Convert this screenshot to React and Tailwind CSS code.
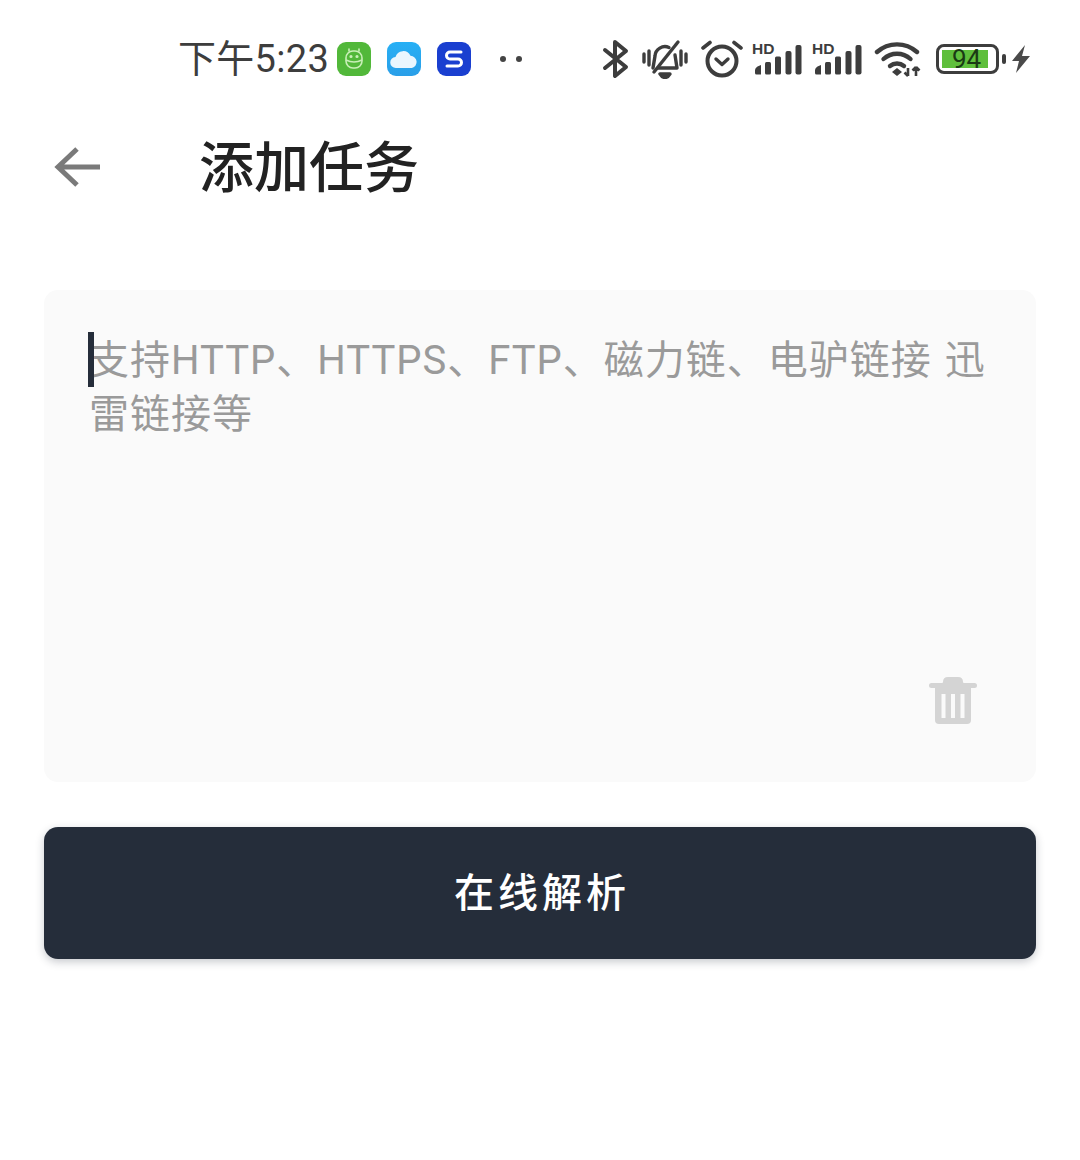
import React from 'react';

const cjk = 'font-["Roboto","Noto_Sans_CJK_SC",sans-serif]';

const AppIcon = ({ className, children }) => (
    <div className={`w-[34px] h-[34px] rounded-[9px] flex items-center justify-center ${className}`}>{children}</div>
);

const SignalIcon = () => (
    <svg width="50" height="42" viewBox="0 -4 50 42" className="shrink-0">
        <text x="0" y="12" fontFamily="Liberation Sans, sans-serif" fontWeight="700" fontSize="15.5" fill="#3d3d3d">HD</text>
        <g fill="#3d3d3d">
            <path d="M3 28 Q3 26 5.5 24.5 L9 23 V32.5 H4.5 Q3 32.5 3 31 Z" />
            <rect x="13" y="20" width="6" height="12.5" rx="1.5" />
            <rect x="23" y="14.5" width="6" height="18" rx="1.5" />
            <rect x="33.5" y="9" width="6" height="23.5" rx="2" />
            <rect x="43.5" y="3" width="6" height="29.5" rx="2" />
        </g>
    </svg>
);

const StatusBar = () => (
    <div className="h-[118px] flex items-center pl-[178px] text-[#3d3d3d]">
        <span className={`text-[38px] leading-none tracking-[0.3px] ${cjk} w-[159px]`}>下午5:23</span>
        <AppIcon className="bg-[#52b83a]">
            <svg width="22" height="24" viewBox="0 0 22 24" fill="none" stroke="#c9efb8" strokeWidth="1.6">
                <path d="M6 4 V2 M16 4 V2" strokeLinecap="round" />
                <rect x="3" y="4" width="16" height="17" rx="7" />
                <path d="M3 13 Q11 17 19 13" />
                <circle cx="8" cy="9.5" r="0.8" fill="#c9efb8" />
                <circle cx="14" cy="9.5" r="0.8" fill="#c9efb8" />
            </svg>
        </AppIcon>
        <AppIcon className="ml-[16px] bg-gradient-to-b from-[#27b0f5] to-[#2a9fe8]">
            <svg width="30" height="20" viewBox="0 0 30 20">
                <path d="M7 19 A5.5 5.5 0 0 1 6.5 8 A8 8 0 0 1 21.5 6.8 A6.2 6.2 0 0 1 23 19 Z" fill="#eaf6fe" />
            </svg>
        </AppIcon>
        <AppIcon className="ml-[16px] bg-[#1a3fd0]">
            <svg width="22" height="22" viewBox="0 0 22 22" fill="none" stroke="#fff" strokeWidth="3" strokeLinecap="round" strokeLinejoin="round">
                <path d="M18 4 H7 A3.5 3.5 0 0 0 7 11 H15 A3.5 3.5 0 0 1 15 18 H4" />
            </svg>
        </AppIcon>
        <div className="ml-[29px] flex gap-[10px]">
            <span className="w-[6px] h-[6px] rounded-full bg-[#444]" />
            <span className="w-[6px] h-[6px] rounded-full bg-[#444]" />
        </div>

        <svg width="28" height="40" viewBox="0 0 28 40" fill="none" stroke="#3d3d3d" strokeWidth="4" strokeLinecap="round" strokeLinejoin="round" className="ml-[80px]">
            <path d="M3 11 L24 28 L13 37 V3 L24 12 L3 29" />
        </svg>
        <svg width="46" height="40" viewBox="0 0 46 40" fill="none" stroke="#3d3d3d" strokeWidth="3.4" strokeLinecap="round" strokeLinejoin="round" className="ml-[12px]">
            <path d="M2 15 V23 M7 12 V26 M39 12 V26 M44 15 V23" />
            <path d="M11 29 L13 17 A10 10 0 0 1 27 8.5 M33 16 L35 29 H16" />
            <path d="M12 33 L36 3" />
            <path d="M18 35 H28 Q26 38.5 23 38.5 Q20 38.5 18 35 Z" fill="#3d3d3d" />
        </svg>
        <svg width="42" height="40" viewBox="0 0 42 40" fill="none" stroke="#3d3d3d" strokeLinecap="round" strokeLinejoin="round" className="ml-[13px]">
            <circle cx="21" cy="22" r="14.5" strokeWidth="4" />
            <path d="M15 20 L21 25.5 L27 20" strokeWidth="3.4" />
            <path d="M2 9 L9 3.5 M40 9 L33 3.5" strokeWidth="3.6" />
        </svg>
        <div className="ml-[9px] flex gap-[10px]">
            <SignalIcon />
            <SignalIcon />
        </div>
        <svg width="48" height="36" viewBox="0 0 48 36" className="ml-[12px]">
            <g fill="none" stroke="#3d3d3d" strokeWidth="4.4" strokeLinecap="round">
                <path d="M3 11 A30 30 0 0 1 43 11" />
                <path d="M9.5 18 A20 20 0 0 1 36.5 18" />
                <path d="M16 25 A11 11 0 0 1 30 25" />
            </g>
            <path d="M23 27 L28 31 L23 35 L18 31 Z" fill="#3d3d3d" />
            <path d="M34 35 V27 M30.5 31.5 L34 35 M42 35 V26 M42 26 L45.5 29.5 M42 26 L38.5 29.5" fill="none" stroke="#3d3d3d" strokeWidth="2.6" />
        </svg>
        <div className="ml-[14px] w-[63px] h-[30px] rounded-[8px] border-[3.5px] border-[#3d3d3d] p-[3px] flex">
            <div className={`w-[46px] h-full pl-[3px] bg-[#5fbf3c] flex items-center justify-center text-[#1a3a14] text-[26px] leading-none font-["Roboto",sans-serif]`}>94</div>
        </div>
        <div className="ml-[3px] w-[4px] h-[10px] rounded-[2px] bg-[#3d3d3d]" />
        <svg width="20" height="30" viewBox="0 0 20 30" className="ml-[5px]">
            <path d="M14 1 L1 17 H8 L5 29 L19 12 H11 Z" fill="#4a4a4a" />
        </svg>
    </div>
);

const Header = () => (
    <div className="h-[98px] flex items-center pl-[54px]">
        <svg width="46" height="46" viewBox="0 0 46 46" fill="none" stroke="#7a7a7a" strokeWidth="5">
            <path d="M46 23 H4 M23 5 L4 23 L23 41" strokeLinejoin="miter" />
        </svg>
        <h1 className={`ml-[99px] pt-[3px] text-[55px] leading-none font-medium text-[#222] ${cjk}`}>添加任务</h1>
    </div>
);

const App = () => (
    <div className="w-[1080px] h-[1160px] bg-white overflow-hidden">
        <StatusBar />
        <Header />
        <div className="mx-[44px] mt-[74px] h-[492px] rounded-[14px] bg-[#fafafa] pl-[45px] pr-[45px] pt-[44px] pb-[58px] flex flex-col justify-between">
            <div className="relative">
                <span className="absolute left-[-1px] top-[-2px] w-[6px] h-[55px] bg-[#252d3a]" />
                <p className={`text-[40px] leading-[54px] tracking-[1px] [word-spacing:2px] text-[#9a9a9a] ${cjk}`}>支持HTTP、HTTPS、FTP、磁力链、电驴链接 迅雷链接等</p>
            </div>
            <svg width="48" height="48" viewBox="0 0 48 48" className="self-end mr-[14px]">
                <path d="M14 6 Q14 1 19 1 H29 Q34 1 34 6 L34.5 7 H45.5 Q48 7 48 9.5 Q48 12 45.5 12 H2.5 Q0 12 0 9.5 Q0 7 2.5 7 H13.5 Z" fill="#d4d4d4" />
                <path d="M6 12 H42 V44 Q42 48 38 48 H10 Q6 48 6 44 Z" fill="#d4d4d4" />
                <path d="M14.5 18 V42 M24 18 V42 M33.5 18 V42" stroke="#fafafa" strokeWidth="4" />
            </svg>
        </div>
        <button className={`mt-[45px] mx-[44px] w-[992px] h-[132px] pl-[4px] pt-[2px] rounded-[14px] bg-[#252d3a] text-white text-[40px] tracking-[4px] font-medium shadow-[0_3px_8px_rgba(37,45,58,0.25)] ${cjk}`}>在线解析</button>
    </div>
);

export default App;
